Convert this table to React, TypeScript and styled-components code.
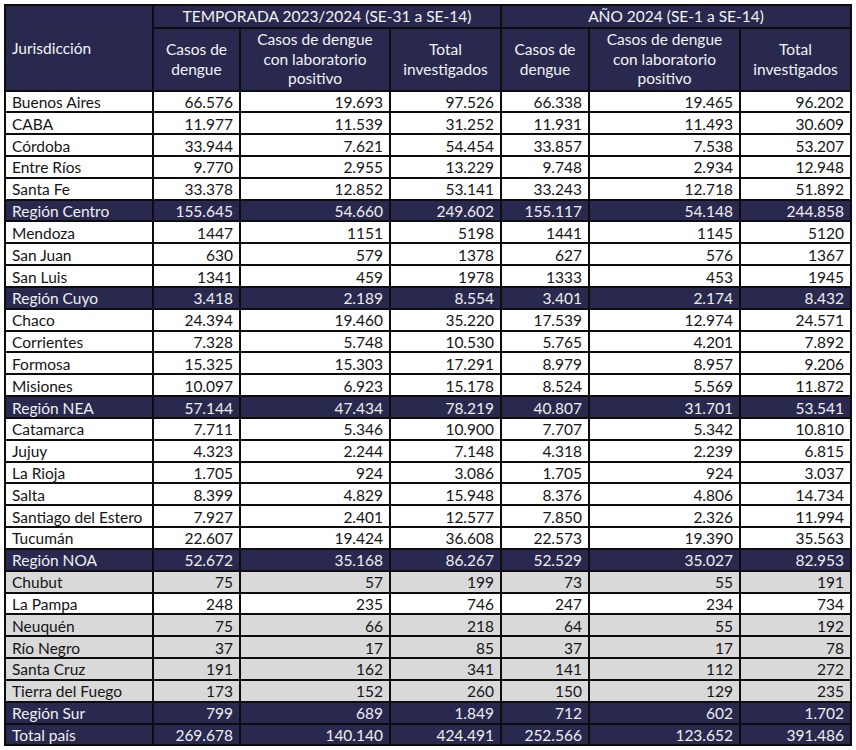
import React from "react";
import styled, { createGlobalStyle } from "styled-components";

const Global = createGlobalStyle`
  html, body { margin: 0; padding: 0; background: #ffffff; }
  body { font-family: "Lato", "Open Sans", sans-serif; }
`;

const NAVY = "#29294f";

const Page = styled.div`
  padding: 4px 0 0 4px;
`;

const Table = styled.table`
  border-collapse: collapse;
  table-layout: fixed;
  width: 846px;
  font-family: "Lato", "Open Sans", sans-serif;
  font-size: 15.5px;
  color: #111;
`;

const HeadCell = styled.th<{ $align?: string }>`
  background: ${NAVY};
  color: #f2f2f2;
  font-weight: 400;
  border: 2px solid #0d0d0d;
  text-align: ${(p) => p.$align || "center"};
  padding: 1px 6px 0;
  line-height: 19.5px;
  vertical-align: middle;
`;

type Kind = "white" | "gray" | "navy";

const Row = styled.tr<{ $kind: Kind }>`
  height: 21.83px;
  background: ${(p) => (p.$kind === "navy" ? NAVY : p.$kind === "gray" ? "#d9d9d9" : "#ffffff")};
  color: ${(p) => (p.$kind === "navy" ? "#eeeeee" : "#151515")};
`;

const NameCell = styled.td`
  border: 2px solid #0d0d0d;
  padding: 2px 6px 0;
  text-align: left;
  white-space: nowrap;
  line-height: 17px;
`;

const NumCell = styled.td`
  border: 2px solid #0d0d0d;
  padding: 2px 6px 0;
  text-align: right;
  white-space: nowrap;
  line-height: 17px;
`;

const rows: [string, Kind, string[]][] = [
  ["Buenos Aires", "white", ["66.576", "19.693", "97.526", "66.338", "19.465", "96.202"]],
  ["CABA", "white", ["11.977", "11.539", "31.252", "11.931", "11.493", "30.609"]],
  ["Córdoba", "white", ["33.944", "7.621", "54.454", "33.857", "7.538", "53.207"]],
  ["Entre Ríos", "white", ["9.770", "2.955", "13.229", "9.748", "2.934", "12.948"]],
  ["Santa Fe", "white", ["33.378", "12.852", "53.141", "33.243", "12.718", "51.892"]],
  ["Región Centro", "navy", ["155.645", "54.660", "249.602", "155.117", "54.148", "244.858"]],
  ["Mendoza", "white", ["1447", "1151", "5198", "1441", "1145", "5120"]],
  ["San Juan", "white", ["630", "579", "1378", "627", "576", "1367"]],
  ["San Luis", "white", ["1341", "459", "1978", "1333", "453", "1945"]],
  ["Región Cuyo", "navy", ["3.418", "2.189", "8.554", "3.401", "2.174", "8.432"]],
  ["Chaco", "white", ["24.394", "19.460", "35.220", "17.539", "12.974", "24.571"]],
  ["Corrientes", "white", ["7.328", "5.748", "10.530", "5.765", "4.201", "7.892"]],
  ["Formosa", "white", ["15.325", "15.303", "17.291", "8.979", "8.957", "9.206"]],
  ["Misiones", "white", ["10.097", "6.923", "15.178", "8.524", "5.569", "11.872"]],
  ["Región NEA", "navy", ["57.144", "47.434", "78.219", "40.807", "31.701", "53.541"]],
  ["Catamarca", "white", ["7.711", "5.346", "10.900", "7.707", "5.342", "10.810"]],
  ["Jujuy", "white", ["4.323", "2.244", "7.148", "4.318", "2.239", "6.815"]],
  ["La Rioja", "white", ["1.705", "924", "3.086", "1.705", "924", "3.037"]],
  ["Salta", "white", ["8.399", "4.829", "15.948", "8.376", "4.806", "14.734"]],
  ["Santiago del Estero", "white", ["7.927", "2.401", "12.577", "7.850", "2.326", "11.994"]],
  ["Tucumán", "white", ["22.607", "19.424", "36.608", "22.573", "19.390", "35.563"]],
  ["Región NOA", "navy", ["52.672", "35.168", "86.267", "52.529", "35.027", "82.953"]],
  ["Chubut", "gray", ["75", "57", "199", "73", "55", "191"]],
  ["La Pampa", "white", ["248", "235", "746", "247", "234", "734"]],
  ["Neuquén", "gray", ["75", "66", "218", "64", "55", "192"]],
  ["Río Negro", "gray", ["37", "17", "85", "37", "17", "78"]],
  ["Santa Cruz", "gray", ["191", "162", "341", "141", "112", "272"]],
  ["Tierra del Fuego", "gray", ["173", "152", "260", "150", "129", "235"]],
  ["Región Sur", "navy", ["799", "689", "1.849", "712", "602", "1.702"]],
  ["Total país", "navy", ["269.678", "140.140", "424.491", "252.566", "123.652", "391.486"]],
];

const widths = [148, 87, 150, 111, 88, 151, 111];

const TopRow = styled.tr`
  height: 22px;
`;
const SubRow = styled.tr`
  height: 63px;
`;

export default function App() {
  return (
    <Page>
      <Global />
      <Table>
        <colgroup>
          {widths.map((w, i) => (
            <col key={i} style={{ width: w }} />
          ))}
        </colgroup>
        <thead>
          <TopRow>
            <HeadCell rowSpan={2} $align="left">Jurisdicción</HeadCell>
            <HeadCell colSpan={3}>TEMPORADA 2023/2024 (SE-31 a SE-14)</HeadCell>
            <HeadCell colSpan={3}>AÑO 2024 (SE-1 a SE-14)</HeadCell>
          </TopRow>
          <SubRow>
            <HeadCell>Casos de<br />dengue</HeadCell>
            <HeadCell>Casos de dengue<br />con laboratorio<br />positivo</HeadCell>
            <HeadCell>Total<br />investigados</HeadCell>
            <HeadCell>Casos de<br />dengue</HeadCell>
            <HeadCell>Casos de dengue<br />con laboratorio<br />positivo</HeadCell>
            <HeadCell>Total<br />investigados</HeadCell>
          </SubRow>
        </thead>
        <tbody>
          {rows.map(([name, kind, vals]) => (
            <Row key={name} $kind={kind}>
              <NameCell>{name}</NameCell>
              {vals.map((v, i) => (
                <NumCell key={i}>{v}</NumCell>
              ))}
            </Row>
          ))}
        </tbody>
      </Table>
    </Page>
  );
}
